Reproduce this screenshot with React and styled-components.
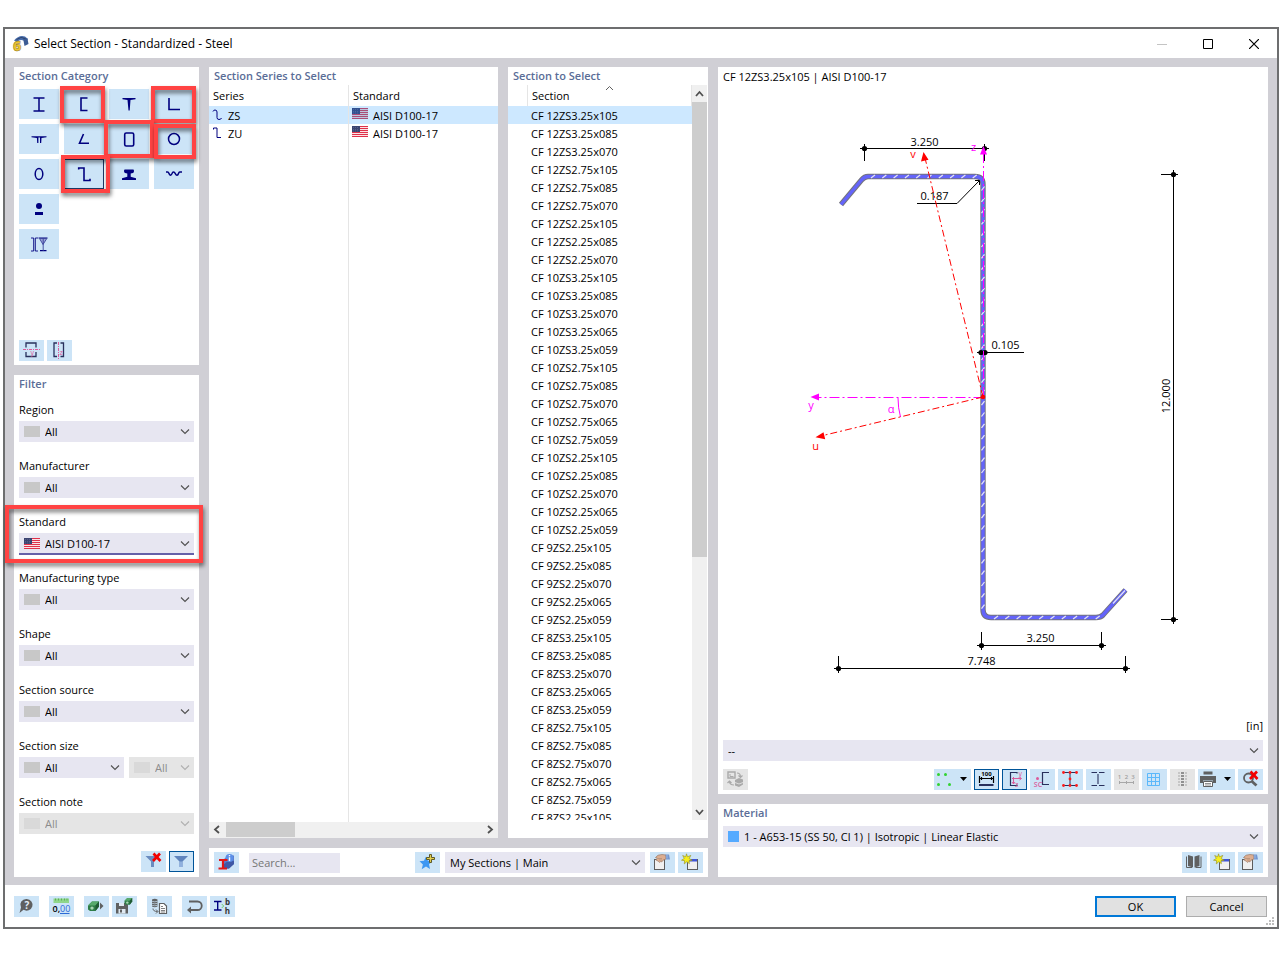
import styled, { createGlobalStyle, css } from 'styled-components';

const GlobalStyle = createGlobalStyle`
  *, *::before, *::after {
    box-sizing: border-box;
  }

  body {
    margin: 0;
    background-color: #fff;
    color: #000;
    font-family: 'Open Sans', 'Noto Sans', sans-serif;
    font-size: 11px;
    line-height: 18px;
  }

  button, input, select {
    font: inherit;
    color: inherit;
    margin: 0;
  }
`;

/* ---------- window ---------- */

const Page = styled.div`
  height: 100vh;
  min-height: 880px;
  padding: 27px 1px 31px 3px;
  display: flex;
`;

const Window = styled.main`
  flex: 1;
  min-width: 0;
  display: flex;
  flex-direction: column;
  border: 2px solid #6d6e6f;
  background-color: #fff;
`;

const TitleBar = styled.header`
  display: flex;
  align-items: center;
  height: 29px;
  padding-left: 7px;
  flex-shrink: 0;
`;

const WindowTitle = styled.h1`
  flex: 1;
  margin: 0 0 0 5px;
  font-size: 12px;
  line-height: 17px;
  font-weight: 400;
`;

const WindowButton = styled.button`
  width: 46px;
  height: 28px;
  padding: 0;
  border: 0;
  background: none;
  color: ${(props) => (props.disabled ? '#c4c4c4' : '#000')};

  svg {
    display: block;
    margin: 0 auto;
  }
`;

const Workspace = styled.div`
  flex: 1;
  min-height: 0;
  display: grid;
  grid-template-columns: 185px minmax(0, 499fr) minmax(0, 550fr);
  gap: 10px;
  padding: 9px 9px 8px;
  background-color: #d0cfd5;
`;

const Column = styled.div`
  display: flex;
  flex-direction: column;
  gap: 10px;
  min-width: 0;
  min-height: 0;
`;

const Panel = styled.section`
  display: flex;
  flex-direction: column;
  min-height: 0;
  flex: ${(props) => (props.$grow ? '1' : 'none')};
  padding: ${(props) => props.$padding || '0 5px 4px'};
  background-color: #fff;
`;

const PanelTitle = styled.h2`
  margin: 0;
  height: ${(props) => props.$height || 22}px;
  padding-left: ${(props) => (props.$inset ? '5px' : '0')};
  font-size: 11px;
  font-weight: 600;
  color: #5a6d97;
`;

/* ---------- controls ---------- */

const ToolButton = styled.button`
  display: block;
  flex: none;
  position: relative;
  width: ${(props) => (props.$wide ? '37px' : '25px')};
  height: 21px;
  padding: 0;
  border: 0;
  background-color: ${(props) => (props.disabled ? '#e5e5e5' : '#cce4f7')};
  ${(props) =>
    props.$active &&
    css`
      box-shadow: inset 0 0 0 1px #005499;
    `}

  svg {
    display: block;
  }
`;

const ToolRow = styled.div`
  display: flex;
  align-items: center;
  gap: 3px;
  justify-content: ${(props) => (props.$end ? 'flex-end' : 'flex-start')};
  margin-top: ${(props) => props.$top || '0'};
`;

const Spacer = styled.span`
  flex: 1;
`;

const SelectBox = styled.div`
  display: flex;
  align-items: center;
  position: relative;
  flex: ${(props) => props.$flex || 'none'};
  min-width: 0;
  height: 21px;
  padding: 0 4px 0 5px;
  background-color: ${(props) => (props.$disabled ? '#e5e5e5' : '#e7e6f1')};
  color: ${(props) => (props.$disabled ? '#8c8c8c' : '#000')};
  box-shadow: ${(props) => (props.$focused ? '0 1px 0 #6560a8, inset 0 -1px 0 #6560a8' : 'none')};
`;

const NativeSelect = styled.select`
  appearance: none;
  flex: 1;
  min-width: 0;
  height: 21px;
  padding: 0;
  border: 0;
  outline: 0;
  background: none;
  color: inherit;
  opacity: 1;
`;

const Swatch = styled.span`
  flex: none;
  width: ${(props) => props.$width || 16}px;
  height: 11px;
  margin-right: 5px;
  background-color: ${(props) => props.$color || '#c8c8c8'};
`;

const FlagSlot = styled.span`
  flex: none;
  display: inline-block;
  width: 16px;
  height: 11px;
  margin-right: 5px;

  svg {
    display: block;
  }
`;

const Marker = styled.span`
  position: absolute;
  inset: ${(props) => props.$inset};
  border: 4px solid #ff4343;
  filter: drop-shadow(1px 3px 2px rgba(0, 0, 0, 0.55));
  pointer-events: none;
  z-index: 2;
`;

/* ---------- categories and filter ---------- */

const CategoryGrid = styled.div`
  display: grid;
  grid-template-columns: repeat(4, 40px);
  gap: 5px;
`;

const CategoryButton = styled.button`
  position: relative;
  grid-column: ${(props) => (props.$newRow ? '1' : 'auto')};
  height: 30px;
  padding: 0;
  border: 0;
  background-color: #cce4f7;
  box-shadow: ${(props) => (props.$active ? 'inset 0 0 0 1px #1d3a66' : 'none')};

  svg {
    display: block;
  }
`;

const FieldList = styled.div`
  display: flex;
  flex-direction: column;
  gap: 15px;
`;

const Field = styled.div`
  position: relative;
`;

const FieldLabel = styled.label`
  display: block;
  height: 20px;
`;

const FieldRow = styled.div`
  display: flex;
  gap: 5px;
`;

/* ---------- lists ---------- */

const ListRow = styled.div`
  flex: 1;
  min-height: 0;
  display: grid;
  grid-template-columns: minmax(0, 289fr) minmax(0, 200fr);
  gap: 10px;
`;

const ListArea = styled.div`
  flex: 1;
  min-height: 0;
  min-width: 0;
  overflow: hidden;
  background: ${(props) =>
    props.$ruled ? 'linear-gradient(#e5e5e5, #e5e5e5) 139px 0 / 1px 100% no-repeat' : 'none'};
`;

const ListWithScroll = styled.div`
  flex: 1;
  min-height: 0;
  display: flex;
`;

const Table = styled.table`
  width: 100%;
  table-layout: fixed;
  border-collapse: separate;
  border-spacing: 0;
`;

const HeadCell = styled.th`
  position: relative;
  height: 21px;
  width: ${(props) => props.$width || 'auto'};
  padding: 0 0 0 4px;
  border-right: ${(props) => (props.$line ? '1px solid #e5e5e5' : '0')};
  text-align: left;
  font-weight: 400;
  line-height: 20px;
`;

const SortMark = styled.svg`
  position: absolute;
  top: 0;
  left: 50%;
  margin-left: -5px;
`;

const Row = styled.tr`
  background-color: ${(props) => (props.$selected ? '#cde8ff' : 'transparent')};
`;

const Cell = styled.td`
  height: 18px;
  padding: 2px 0 0 3px;
  border-right: ${(props) => (props.$line ? '1px solid #e5e5e5' : '0')};
  line-height: 16px;
  white-space: nowrap;
`;

const CellContent = styled.span`
  display: flex;
  align-items: flex-start;
  height: 16px;
`;

const ScrollTrack = styled.div`
  display: flex;
  flex: none;
  flex-direction: ${(props) => (props.$vertical ? 'column' : 'row')};
  background-color: #f0f0f0;
  width: ${(props) => (props.$vertical ? '16px' : 'auto')};
  height: ${(props) => (props.$vertical ? 'auto' : '16px')};
  border-right: ${(props) => (props.$vertical ? '1px solid #fff' : '0')};

  svg {
    display: block;
    flex: none;
  }
`;

const ScrollThumb = styled.div`
  background-color: #cdcdcd;
  flex: ${(props) => props.$share} 1 0;
  margin: ${(props) => (props.$flat ? '0 0 1px' : '0')};
`;

const ScrollRest = styled.div`
  flex: ${(props) => props.$share} 1 0;
`;

const SearchBar = styled.div`
  display: flex;
  align-items: center;
  height: 29px;
  padding: 0 5px;
  background-color: #fff;
`;

const SearchInput = styled.input`
  width: 91px;
  height: 20px;
  margin-left: 10px;
  padding: 0 3px;
  border: 0;
  background-color: #e7e6f1;

  &::placeholder {
    color: #767676;
    opacity: 1;
  }
`;

const GroupSelect = styled.div`
  display: flex;
  width: 200px;
  margin: 0 5px;
`;

/* ---------- preview ---------- */

const PreviewTitle = styled.p`
  margin: 0;
  height: 20px;
  line-height: 20px;
`;

const Drawing = styled.svg`
  display: block;
  width: 100%;
  flex: 1;
  min-height: 0;
  font-size: 11px;
`;

const UnitLabel = styled.p`
  margin: 0 0 5px;
  text-align: right;
`;

/* ---------- footer ---------- */

const Footer = styled.footer`
  position: relative;
  display: flex;
  align-items: center;
  flex-shrink: 0;
  gap: 10px;
  height: 42px;
  padding: 0 10px 0 9px;
`;

const DialogButton = styled.button`
  width: 81px;
  height: 21px;
  padding: 0;
  line-height: 17px;
  background-color: #e1e1e1;
  border: ${(props) => (props.$primary ? '2px solid #0078d7' : '1px solid #adadad')};
`;

const Grip = styled.svg`
  position: absolute;
  right: 2px;
  bottom: 1px;
`;

/* ---------- icons ---------- */

const NAVY = '#00007f';
const INK = '#28305c';
const PINK = '#dc5a9b';
const GREY = '#5f6061';

function Icon({ w = 25, h = 21, children }) {
  return (
    <svg width={w} height={h} viewBox={`0 0 ${w} ${h}`} fill="none" overflow="visible" aria-hidden="true">
      {children}
    </svg>
  );
}

function Chevron({ muted }) {
  return (
    <svg width="10" height="7" viewBox="0 0 10 7" fill="none" aria-hidden="true">
      <path d="M1 1.5 5 5.5 9 1.5" stroke={muted ? '#b0b0b0' : '#505050'} strokeWidth="1.1" />
    </svg>
  );
}

function Flag({ tinted }) {
  const red = tinted ? '#a94d78' : '#e0314a';
  const white = tinted ? '#bcc6e0' : '#fbe3e6';
  return (
    <svg width="16" height="11" viewBox="0 0 16 11" aria-hidden="true">
      <rect width="16" height="11" fill={white} />
      {[0, 2, 4, 6, 8, 10].map((y) => (
        <rect key={y} y={y} width="16" height="1" fill={red} />
      ))}
      <rect width="8" height="6" fill={tinted ? '#32508f' : '#3b4470'} />
      <path
        d="M1 1.5h6M1 3.5h6M1 5h6"
        stroke={tinted ? '#5a77ad' : '#69729a'}
        strokeWidth="0.6"
        strokeDasharray="1 1"
      />
    </svg>
  );
}

function RedCross({ x, y }) {
  return (
    <path
      transform={`translate(${x} ${y})`}
      d="M1 0.5 8 8M7.5 0.5 0.5 8"
      stroke="#f20000"
      strokeWidth="2.6"
    />
  );
}

function HandWindowIcon() {
  return (
    <Icon>
      <rect x="4.5" y="7.5" width="10" height="10" fill="#f0f0f0" stroke="#5d5d5d" />
      <path
        d="M5.5 5.5 8 3.2 12 2.5l4 .5v4l-3 1.2-1 1.6-1.4-.2-1 .8-1-.8L7 8.5 5.800 8l1.500-1.800z"
        fill="#dcae91"
        stroke="#8f6b57"
        strokeWidth="0.6"
      />
      <path d="M8 6.5h4M9 8h3" stroke="#a17c66" strokeWidth="0.5" />
      <path d="M15.5 2.500h3.500l1 5h-4z" fill="#7396cf" />
      <path d="M17 3v3.500" stroke="#9cb8e4" />
    </Icon>
  );
}

function NewWindowIcon() {
  return (
    <Icon>
      <rect x="9.5" y="7.5" width="10" height="10" fill="#f0f0f0" stroke="#5d5d5d" />
      <rect x="10" y="7" width="9" height="2.5" fill="#3f55d8" />
      <path
        d="m8.5 1.800 1 3 3.300-1.400-1.600 3.200 3 1.600-3.200.5.4 3-2.600-2-2.500 2.200.3-3.200-3.100-.5 2.800-1.700-1.600-3 3 1.300z"
        fill="#f6ee1c"
        stroke="#8f8d24"
        strokeWidth="0.6"
      />
    </Icon>
  );
}

function GreenBlock({ x, y, scale = 1 }) {
  return (
    <g transform={`translate(${x} ${y}) scale(${scale})`}>
      <path d="M0 4 4 0h7v5L7.5 9.5H2L0 8z" fill="#2f7d47" />
      <path d="M0 4 4 0h7L7.5 4z" fill="#57a96c" />
      <path d="M7.5 4 11 0v5L7.5 9.5z" fill="#1f5a33" />
      <circle cx="4" cy="6.6" r="1.700" fill="#a8d4b2" />
    </g>
  );
}

const categoryIcons = {
  i: <path d="M14.5 9h11M14.5 22h11M20 9v13" stroke={NAVY} strokeWidth="1.5" />,
  channel: <path d="M23.5 9H17v12.500h6.500" stroke={NAVY} strokeWidth="1.600" />,
  tee: <path d="M13.500 9h13v1.300l-5 .6-.8 10.500h-1.200l-1-10.500-5-.6z" fill={NAVY} />,
  angle: <path d="M15 9v11.500h11" stroke={NAVY} strokeWidth="1.6" />,
  doubleTee: (
    <path d="M12.5 12.200h15v1.100l-5 .8-.3 5h-1.200v-5.600h-1.600v5.600h-1.200l-.3-5-5.400-.8z" fill={NAVY} />
  ),
  openAngle: <path d="m19.5 10-4 9.300H25" stroke={NAVY} strokeWidth="1.6" />,
  box: <rect x="15.7" y="9" width="9" height="13" rx="1.5" stroke={NAVY} strokeWidth="1.6" />,
  pipe: <circle cx="20" cy="15" r="5.5" stroke={NAVY} strokeWidth="1.5" />,
  oval: <ellipse cx="20" cy="15" rx="3.800" ry="5.5" stroke={NAVY} strokeWidth="1.5" />,
  zed: <path d="M14.7 10.500V9H20v12.500h6v-1.700" stroke={NAVY} strokeWidth="1.6" />,
  rail: (
    <path
      d="M16 10.500h8q1 0 1 1.400t-1 2.100l-2.300.5v3.200l5.300 1.500V21H13v-1.800l5.300-1.500v-3.200L16 14q-1-.7-1-2.100t1-1.400z"
      fill={NAVY}
    />
  ),
  corrugated: (
    <path
      d="M12 13h1.500q1 0 1.500 1.500t1.500 1.700q1 0 1.500-1.600t1.500-1.600q1 0 1.800 1.600t1.700 1.600q1 0 1.500-1.700T26 13h2"
      stroke={NAVY}
      strokeWidth="1.500"
    />
  ),
  builtUp: (
    <>
      <circle cx="20" cy="12" r="3" fill={NAVY} />
      <rect x="16" y="18" width="8" height="3" fill={NAVY} />
    </>
  ),
  mixed: (
    <>
      <path d="M12 9h2.700v13H12M19 9h-2.700v13H19" stroke={NAVY} strokeWidth="0.9" />
      <path d="M19.5 9h9M21 21.700h6.500" stroke={NAVY} strokeWidth="1.200" />
      <path d="m20.5 9.500 3.500 6 3.800-6zM24.200 9v13" fill="#9ba4d6" stroke="#39419b" strokeWidth="0.9" />
    </>
  ),
};

const categories = [
  { id: 'i', label: 'I-sections' },
  { id: 'channel', label: 'Channels', marker: '-3px -1px -4px -4px' },
  { id: 'tee', label: 'T-sections' },
  { id: 'angle', label: 'Angles', marker: '-3px -2px -4px -3px' },
  { id: 'doubleTee', label: 'Double T-sections' },
  { id: 'openAngle', label: 'Open angles' },
  { id: 'box', label: 'Rectangular hollow sections', marker: '-4px -5px -4px -5px' },
  { id: 'pipe', label: 'Pipes', marker: '0 -2px -5px 0' },
  { id: 'oval', label: 'Oval hollow sections' },
  { id: 'zed', label: 'Z-sections', active: true, marker: '-4px -6px -4px -3px' },
  { id: 'rail', label: 'Rails' },
  { id: 'corrugated', label: 'Corrugated sheets' },
  { id: 'builtUp', label: 'Round and flat bars' },
  { id: 'mixed', label: 'Built-up sections', newRow: true },
];

/* ---------- data ---------- */

const filters = [
  { id: 'region', label: 'Region', options: [{ value: 'All' }] },
  { id: 'manufacturer', label: 'Manufacturer', options: [{ value: 'All' }] },
  { id: 'standard', label: 'Standard', options: [{ value: 'AISI D100-17', flag: true }], focused: true },
  { id: 'mtype', label: 'Manufacturing type', options: [{ value: 'All' }] },
  { id: 'shape', label: 'Shape', options: [{ value: 'All' }] },
  { id: 'source', label: 'Section source', options: [{ value: 'All' }] },
  { id: 'size', label: 'Section size', options: [{ value: 'All' }, { value: 'All', disabled: true }] },
  { id: 'note', label: 'Section note', options: [{ value: 'All', disabled: true }] },
];

const sections = [
  ...['105', '085', '070'].map((t) => `12ZS3.25x${t}`),
  ...['105', '085', '070'].map((t) => `12ZS2.75x${t}`),
  ...['105', '085', '070'].map((t) => `12ZS2.25x${t}`),
  ...['105', '085', '070', '065', '059'].map((t) => `10ZS3.25x${t}`),
  ...['105', '085', '070', '065', '059'].map((t) => `10ZS2.75x${t}`),
  ...['105', '085', '070', '065', '059'].map((t) => `10ZS2.25x${t}`),
  ...['105', '085', '070', '065', '059'].map((t) => `9ZS2.25x${t}`),
  ...['105', '085', '070', '065', '059'].map((t) => `8ZS3.25x${t}`),
  ...['105', '085', '070', '065', '059'].map((t) => `8ZS2.75x${t}`),
  '8ZS2.25x105',
];

/* ---------- components ---------- */

function Select({ id, label, value, swatch, swatchWidth, flag, disabled, focused, flex }) {
  return (
    <SelectBox $disabled={disabled} $focused={focused} $flex={flex}>
      {flag && (
        <FlagSlot>
          <Flag />
        </FlagSlot>
      )}
      {swatch && <Swatch $color={swatch} $width={swatchWidth} />}
      <NativeSelect id={id} aria-label={label} disabled={disabled}>
        <option>{value}</option>
      </NativeSelect>
      <Chevron muted={disabled} />
    </SelectBox>
  );
}

function Tool({ label, wide, children, ...props }) {
  return (
    <ToolButton type="button" aria-label={label} $wide={wide} {...props}>
      <Icon w={wide ? 37 : 25}>{children}</Icon>
    </ToolButton>
  );
}

function CategoryPanel() {
  return (
    <Panel $grow>
      <PanelTitle>Section Category</PanelTitle>
      <CategoryGrid>
        {categories.map((item) => (
          <CategoryButton
            key={item.id}
            type="button"
            aria-label={item.label}
            $active={item.active}
            $newRow={item.newRow}
          >
            <Icon w={40} h={30}>
              {categoryIcons[item.id]}
            </Icon>
            {item.marker && <Marker $inset={item.marker} />}
          </CategoryButton>
        ))}
      </CategoryGrid>
      <ToolRow $top="auto">
        <Tool label="Mirror about y">
          <path d="M7 7.500V3h10v4.500M7 12v4.500h10V12" stroke={INK} strokeWidth="1.300" />
          <path d="M4 9.500h17" stroke={PINK} strokeDasharray="3 1 1 1" />
          <text x="11.5" y="15" fontSize="7" fill={PINK}>y</text>
        </Tool>
        <Tool label="Mirror about z">
          <path d="M10 3H7v13.500h3M13.500 3h3v13.500h-3" stroke={INK} strokeWidth="1.300" />
          <path d="M11.500 2v17" stroke={PINK} strokeDasharray="3 1 1 1" />
          <text x="12.5" y="15" fontSize="7" fill={PINK}>z</text>
        </Tool>
      </ToolRow>
    </Panel>
  );
}

function FilterPanel() {
  return (
    <Panel $padding="0 5px 5px">
      <PanelTitle $height={26}>Filter</PanelTitle>
      <FieldList>
        {filters.map((field) => (
          <Field key={field.id}>
            <FieldLabel htmlFor={field.id}>{field.label}</FieldLabel>
            <FieldRow>
              {field.options.map((option, index) => (
                <Select
                  key={index}
                  id={index ? `${field.id}-upper` : field.id}
                  label={index ? `${field.label}, upper limit` : undefined}
                  value={option.value}
                  flag={option.flag}
                  swatch={!option.flag && (option.disabled ? '#d9d9d9' : '#c8c8c8')}
                  disabled={option.disabled}
                  focused={field.focused}
                  flex={field.options.length > 1 ? ['96', '56'][index] : '1'}
                />
              ))}
            </FieldRow>
            {field.focused && <Marker $inset="-8px -9px -9px -14px" />}
          </Field>
        ))}
      </FieldList>
      <ToolRow $end $top="17px">
        <Tool label="Clear filter">
          <path d="M4.500 5H18l-5 5.500V16h-3v-5.500z" fill="#6a8cc0" />
          <RedCross x={11.5} y={2} />
        </Tool>
        <Tool label="Filter" $active>
          <path d="M5 5h14l-5.500 5.500V16h-3v-5.500z" fill="#5f84bd" />
          <path d="M10.500 10.500h3V16h-3z" fill="#8fb0de" />
        </Tool>
      </ToolRow>
    </Panel>
  );
}

function SeriesPanel() {
  return (
    <Panel $grow $padding="0">
      <PanelTitle $height={18} $inset>Section Series to Select</PanelTitle>
      <ListArea $ruled>
        <Table>
          <thead>
            <tr>
              <HeadCell $width="140px" $line>Series</HeadCell>
              <HeadCell>Standard</HeadCell>
            </tr>
          </thead>
          <tbody>
            {['ZS', 'ZU'].map((name, index) => (
              <Row key={name} $selected={index === 0}>
                <Cell $line>
                  <CellContent>
                    <Icon w={16} h={16}>
                      <path
                        d={index === 0 ? 'M1 3.500Q1.500 2 3 2q2 0 2 2v5.500q0 2 2 2T9.500 10' : 'M1.500 3.500V2H5v9.500h4'}
                        stroke={NAVY}
                      />
                    </Icon>
                    {name}
                  </CellContent>
                </Cell>
                <Cell>
                  <CellContent>
                    <FlagSlot>
                      <Flag tinted={index === 0} />
                    </FlagSlot>
                    AISI D100-17
                  </CellContent>
                </Cell>
              </Row>
            ))}
          </tbody>
        </Table>
      </ListArea>
      <ScrollTrack>
        <Icon w={17} h={16}>
          <path d="M10 4 6 7.500 10 11" stroke="#505050" strokeWidth="1.800" />
        </Icon>
        <ScrollThumb $share={69} $flat />
        <ScrollRest $share={186} />
        <Icon w={17} h={16}>
          <path d="m7 4 4 3.500L7 11" stroke="#505050" strokeWidth="1.800" />
        </Icon>
      </ScrollTrack>
    </Panel>
  );
}

function SectionPanel() {
  return (
    <Panel $grow $padding="0 0 18px">
      <PanelTitle $height={18} $inset>Section to Select</PanelTitle>
      <ListWithScroll>
        <ListArea>
          <Table>
            <thead>
              <tr>
                <HeadCell $width="20px" $line />
                <HeadCell $line>
                  Section
                  <SortMark width="9" height="6" viewBox="0 0 9 6" fill="none">
                    <path d="M1 5 4.500 1.500 8 5" stroke="#606060" />
                  </SortMark>
                </HeadCell>
              </tr>
            </thead>
            <tbody>
              {sections.map((name, index) => (
                <Row key={name} $selected={index === 0}>
                  <Cell />
                  <Cell>CF {name}</Cell>
                </Row>
              ))}
            </tbody>
          </Table>
        </ListArea>
        <ScrollTrack $vertical>
          <Icon w={15} h={17}>
            <path d="M4 11 7.500 7l3.500 4" stroke="#505050" strokeWidth="1.800" />
          </Icon>
          <ScrollThumb $share={455} />
          <ScrollRest $share={246} />
          <Icon w={15} h={17}>
            <path d="M4 7l3.500 4L11 7" stroke="#505050" strokeWidth="1.800" />
          </Icon>
        </ScrollTrack>
      </ListWithScroll>
    </Panel>
  );
}

function SearchPanel() {
  return (
    <SearchBar>
      <Tool label="Section info">
        <path d="m9 8 5-4.500h6V12l-5 4.500H9z" fill="#5b78c8" />
        <path d="m9 13 5-4h6v3l-5 4.500H9z" fill="#3f58a6" />
        <circle cx="15.500" cy="6" r="4" fill="#5b8fe8" />
        <path d="M15.500 5.300V9M15.500 3v1.300" stroke="#fff" strokeWidth="1.400" />
        <path d="M5 8h8.500M4.500 16.500H13M9 8v8.500" stroke="#e01818" strokeWidth="2.200" />
      </Tool>
      <SearchInput type="search" placeholder="Search..." aria-label="Search sections" />
      <Spacer />
      <Tool label="Add to my sections">
        <path
          d="m11 4.500 1.900 4.300 4.600.5-3.500 3 1 4.800-4-2.500-4.300 2.700 1.200-4.800L4.500 9.300 9 8.800z"
          fill="#3d97f2"
        />
        <path d="M14.500 2.500h2v3h3v2h-3v3h-2v-3h-3v-2h3z" fill="#e2cf4e" stroke="#5f5a28" />
      </Tool>
      <GroupSelect>
        <Select label="Section group" value="My Sections | Main" flex="1" />
      </GroupSelect>
      <ToolRow>
        <ToolButton type="button" aria-label="Edit group">
          <HandWindowIcon />
        </ToolButton>
        <ToolButton type="button" aria-label="New group">
          <NewWindowIcon />
        </ToolButton>
      </ToolRow>
    </SearchBar>
  );
}

const PROFILE =
  'M841 204.500 861.500 180Q864.500 176.500 868 176.500H975Q983 176.500 983 184.500V609.500Q983 617.500 991 617.500H1096Q1100.500 617.500 1103 615L1125.500 590';

function Dot({ x, y }) {
  return <circle cx={x} cy={y} r="2.6" fill="#000" />;
}

function SectionDrawing() {
  const range = (count) => Array.from({ length: count }, (_, i) => i);
  return (
    <Drawing viewBox="723 87 540 630" role="img" aria-label="CF 12ZS3.25x105 cross-section">
      <g fill="none">
        <path d={PROFILE} stroke="#74747c" strokeWidth="5.400" />
        <path d={PROFILE} stroke="#6464fa" strokeWidth="3.400" />
        <g stroke="#e6e6f4" strokeWidth="1.200">
          {range(10).map((i) => (
            <path key={i} d={`M${871 + i * 11.3} 178l4-3`} />
          ))}
          {range(38).map((i) => (
            <path key={i} d={`M981.5 ${190.5 + i * 11.3}l3-4`} />
          ))}
          {range(10).map((i) => (
            <path key={i} d={`M${994 + i * 11.3} 619l4-3`} />
          ))}
          <path d="M1113 603.500 1125 590.500" />
        </g>
      </g>

      {/* dimension lines */}
      <g stroke="#000" fill="none">
        <path d="M860 148.500h129M864.500 144v17M984.500 144v17" />
        <path d="M917 203.500h40L979 181M975 180.500h4.500v4.500" />
        <path d="M977 352.500h47" />
        <path d="M977 645.500h129M981.500 632v18M1101.500 632v18" />
        <path d="M834 668.500h296M838.500 656v17M1125.500 656v17" />
        <path d="M1173.500 170v454M1161 174.500h17M1161 619.500h17" />
      </g>
      <Dot x={864.5} y={148.5} />
      <Dot x={984.5} y={148.5} />
      <Dot x={981} y={352.5} />
      <Dot x={985} y={352.5} />
      <Dot x={981.5} y={645.5} />
      <Dot x={1101.5} y={645.5} />
      <Dot x={838.5} y={668.5} />
      <Dot x={1125.5} y={668.5} />
      <Dot x={1173.5} y={174.5} />
      <Dot x={1173.5} y={619.5} />
      <g textAnchor="middle">
        <text x="924.5" y="146">3.250</text>
        <text x="934.5" y="200">0.187</text>
        <text x="1005.5" y="349">0.105</text>
        <text x="1040.5" y="642">3.250</text>
        <text x="981.5" y="665">7.748</text>
        <text transform="translate(1170 396) rotate(-90)">12.000</text>
      </g>

      {/* axes */}
      <g stroke="#f0f" fill="none">
        <path d="M983.500 397.500H819M983.500 397V154" strokeDasharray="10 3 2 3" />
        <path d="M898 398q0 10 2.500 19" />
      </g>
      <g stroke="#f00" fill="none" strokeDasharray="7 3 2 3">
        <path d="M983 397 925.500 160M983 397 823 435.500" />
      </g>
      <path d="m810.500 397 8.500-3.500v7zM983.500 146l-3.500 8.500h7z" fill="#f0f" />
      <path d="m923.500 152-2.500 9.500 7.500-1.700zM815.500 437.200l8-5 1.700 7z" fill="#f00" />
      <circle cx="983" cy="397" r="2.3" fill="#f00" />
      <g textAnchor="middle" fill="#f0f">
        <text x="811" y="409">y</text>
        <text x="891" y="413">α</text>
        <text x="973.5" y="151">z</text>
      </g>
      <g textAnchor="middle" fill="#f00">
        <text x="913" y="158">v</text>
        <text x="815.5" y="450">u</text>
      </g>
    </Drawing>
  );
}

function PreviewPanel() {
  return (
    <Panel $grow>
      <PreviewTitle>CF 12ZS3.25x105 | AISI D100-17</PreviewTitle>
      <SectionDrawing />
      <UnitLabel>[in]</UnitLabel>
      <Select label="Section variant" value="--" />
      <ToolRow $top="8px">
        <Tool label="Swap view" disabled>
          <path d="M5 3h7v6H5z" stroke="#a9a9a9" strokeWidth="1.400" />
          <path d="M7 5v2.500h3.500" stroke="#a9a9a9" />
          <path d="m12 11 4-2 4 1.500v5L16 18l-4-1.500z" fill="#a9a9a9" />
          <path d="M12 13.500 16 15l4-1.500" stroke="#dcdcdc" />
          <path
            d="M14 4q3.500 0 3.500 4M15.500 6.500l2 2 2-2M11 16q-4.500 0-4.500-3.500M4.500 14l2-2 2 2"
            stroke="#a9a9a9"
            strokeWidth="1.200"
          />
        </Tool>
        <Spacer />
        <Tool label="Stress points" wide>
          {[[4.5, 5.5], [11.5, 5.5], [4.5, 15.5], [15.5, 15.5]].map(([x, y]) => (
            <circle key={`${x}-${y}`} cx={x} cy={y} r="1.5" fill="#31d331" />
          ))}
          <path d="M26 8h7l-3.500 4z" fill="#000" />
        </Tool>
        <Tool label="Dimensions" $active>
          <text x="12.5" y="7" fontSize="6" fontWeight="700" textAnchor="middle" fill="#000">100</text>
          <path d="M5.500 7v7M19.500 7v7M5.500 9.500h14M7.500 8v3M17.500 8v3" stroke="#000" strokeWidth="1.200" />
          <path d="M5 16h14.500" stroke={INK} strokeWidth="2" />
        </Tool>
        <Tool label="Section axes" $active>
          <path d="M15 4.500v-1H8.500v13H15v-1" stroke={INK} strokeWidth="1.200" />
          <path d="M10 9.500h9M11.500 8v7M17.500 8l2 1.500-2 1.500M10 13l1.500 2 1.500-2" stroke={PINK} />
          <text x="16.5" y="7" fontSize="7" fill={PINK}>y</text>
          <text x="13" y="18" fontSize="7" fill={PINK}>z</text>
        </Tool>
        <Tool label="Shear center">
          <path d="M19 3.500h-6.500v12H19" stroke={INK} strokeWidth="1.200" />
          <circle cx="7.5" cy="9.5" r="1.5" fill={PINK} />
          <text x="8" y="18" fontSize="7" fontWeight="600" textAnchor="middle" fill={PINK}>SC</text>
        </Tool>
        <Tool label="Nodes">
          <path d="M5 3.500h14M5 16.500h14M12 3.500v13" stroke={INK} />
          {[[5.5, 3.5], [12, 3.5], [18.5, 3.5], [12, 10], [5.5, 16.5], [12, 16.5], [18.5, 16.5]].map(
            ([x, y]) => (
              <circle key={`${x}-${y}`} cx={x} cy={y} r="1.4" fill="#ff1a1a" />
            )
          )}
        </Tool>
        <Tool label="Elements">
          <path
            d="M5.500 3.500h5.500M13 3.500h5.500M5.500 16.500h5.500M13 16.500h5.500M12 5v10"
            stroke={INK}
            strokeWidth="1.100"
          />
        </Tool>
        <Tool label="Numbering" disabled>
          <g fontSize="6" fontWeight="600" textAnchor="middle" fill="#a0a0a0">
            <text x="5.5" y="10">1</text>
            <text x="12.5" y="10">2</text>
            <text x="19" y="10">3</text>
          </g>
          <path d="M5 13.500h15M5.500 12v3M12.500 12v3M19.500 12v3" stroke="#a8a8a8" />
        </Tool>
        <Tool label="Grid">
          <path
            d="M5.500 4.500h12v12h-12zM9.500 4.500v12M13.500 4.500v12M5.500 8.500h12M5.500 12.500h12"
            stroke="#5ab8fb"
          />
        </Tool>
        <Tool label="Values" disabled>
          <path d="M12.500 3v15" stroke="#909090" strokeWidth="3" strokeDasharray="2 1" />
          <path d="M9 3.500v14M16 3.500v14" stroke="#a8a8a8" strokeWidth="2" strokeDasharray="1 2" />
        </Tool>
        <Tool label="Print" wide>
          <path d="M5.500 2.500h9v3h-9zM2 7h16v7h-3v-2.500H5V14H2z" fill={GREY} />
          <path d="M5.500 12.500h9v5h-9z" fill="#fff" stroke={GREY} />
          <path d="M7 14.500h6M7 16h6" stroke={GREY} strokeWidth="0.700" />
          <path d="M26 8h7l-3.500 4z" fill="#000" />
        </Tool>
        <Tool label="Reset zoom">
          <circle cx="10.500" cy="9" r="4.500" stroke={GREY} strokeWidth="1.800" />
          <path d="m13.500 12 5 4.500" stroke={GREY} strokeWidth="2.800" />
          <RedCross x={11.5} y={2} />
        </Tool>
      </ToolRow>
    </Panel>
  );
}

function MaterialPanel() {
  return (
    <Panel>
      <PanelTitle>Material</PanelTitle>
      <Select
        label="Material"
        value="1 - A653-15 (SS 50, Cl 1) | Isotropic | Linear Elastic"
        swatch="#55aaff"
        swatchWidth={11}
      />
      <ToolRow $end $top="5px">
        <Tool label="Material library">
          <path d="M6 3 11 4.500v11L6 14zM17.500 3l-5 1.500v11l5-1.500z" fill={GREY} />
          <path d="M4.500 4.500v11H10M19 4.500v11h-5.500" stroke={GREY} />
        </Tool>
        <ToolButton type="button" aria-label="New material">
          <NewWindowIcon />
        </ToolButton>
        <ToolButton type="button" aria-label="Edit material">
          <HandWindowIcon />
        </ToolButton>
      </ToolRow>
    </Panel>
  );
}

function DialogFooter() {
  return (
    <Footer>
      <Tool label="Help">
        <path
          d="M12.800 3a6 5.800 0 1 1-3.300 10.800L5.500 17l1.500-5.500A6 5.800 0 0 1 12.800 3z"
          fill={GREY}
        />
        <text x="12.8" y="12.5" fontSize="10" fontWeight="700" textAnchor="middle" fill="#e3eef8">?</text>
      </Tool>
      <Tool label="Units and decimal places">
        <path d="M4.500 2.500H20V7H4.500z" fill="#8fd68a" />
        <path
          d="M6.500 2.500v2M9.500 2.500v2M12.500 2.500v2M15.500 2.500v2M18 2.500v2"
          stroke="#4fa34c"
          strokeWidth="0.800"
        />
        <text x="3.5" y="16" fontSize="9" fontWeight="600" fill="#000">0,</text>
        <text x="11" y="16" fontSize="9" fill="#2c6ad6">00</text>
        <path d="M11 17.500h9.500" stroke="#2c6ad6" />
      </Tool>
      <ToolRow>
        <Tool label="Load">
          <GreenBlock x={4} y={5.5} />
          <path d="M16 6.500v7l3.500-3.500z" fill={GREY} />
        </Tool>
        <Tool label="Save">
          <path d="M4 7h10l2 2v8.500H4z" fill={GREY} />
          <path d="M7 7h5v3H7zM6.500 13h7v4.500h-7z" fill="#dfe9f2" />
          <path d="M8 13.500h2v3H8z" fill={GREY} />
          <GreenBlock x={12.5} y={2} scale={0.7} />
        </Tool>
      </ToolRow>
      <Tool label="Import from database">
        <path d="M5 3.500q2.700-1.300 5.500 0v7q-2.700 1.300-5.500 0z" fill={GREY} />
        <path
          d="M5 5.300q2.700 1 5.500 0M5 7.300q2.700 1 5.500 0M5 9.300q2.700 1 5.500 0"
          stroke="#cce4f7"
          strokeWidth="0.700"
        />
        <path d="M6 12.500q0 3 4.500 3M9 13.500l2 2-2 2" stroke={GREY} />
        <path d="M12.500 7.500h4.500l2.500 2.500v7.500h-7z" fill="#fff" stroke={GREY} strokeWidth="1.200" />
        <path d="M14 10.500h2M14 12.500h4M14 14.500h4M14 16h4" stroke={GREY} strokeWidth="0.800" />
      </Tool>
      <ToolRow>
        <Tool label="Undo">
          <path d="M7 5.500h8.500a4 4 0 0 1 0 8.500H7" stroke={GREY} strokeWidth="1.800" />
          <path d="m5 14 4-3.500v7z" fill={GREY} />
        </Tool>
        <Tool label="Parametric section">
          <path d="M4 5.500h7.500M4 14h7.500M7.700 5.500V14" stroke={NAVY} strokeWidth="1.400" />
          <path d="m11.700 8 2 2-2 2" stroke="#6fce6f" />
          <g fontSize="8" fontWeight="700" textAnchor="middle" fill="#333">
            <text x="17.5" y="9">b</text>
            <text x="17.5" y="18">h</text>
          </g>
        </Tool>
      </ToolRow>
      <Spacer />
      <DialogButton type="submit" $primary>OK</DialogButton>
      <DialogButton type="button">Cancel</DialogButton>
      <Grip width="9" height="9" viewBox="0 0 9 9" fill="#bdbdbd" aria-hidden="true">
        <path d="M6 0h2v2H6zM3 3h2v2H3zM6 3h2v2H6zM0 6h2v2H0zM3 6h2v2H3zM6 6h2v2H6z" />
      </Grip>
    </Footer>
  );
}

function App() {
  return (
    <>
      <GlobalStyle />
      <Page>
        <Window>
          <TitleBar>
            <Icon w={17} h={17}>
              <path d="M2 5.500Q7-.5 13 1.500l3 2.500-2 3Q9 3 5 7z" fill="#4a6fae" />
              <path d="m11 3 4.500.5 1 5.500-4 2z" fill="#3c5c95" />
              <path d="M4.500 4.500Q9 1 13.500 3.500" stroke="#27375c" strokeWidth="0.800" />
              <text x="1" y="15.5" fontSize="14" fontWeight="800" fill="#efc62e" stroke="#8e7420" strokeWidth="0.5">
                6
              </text>
            </Icon>
            <WindowTitle>Select Section - Standardized - Steel</WindowTitle>
            <WindowButton type="button" aria-label="Minimize" disabled>
              <svg width="10" height="10" viewBox="0 0 10 10">
                <path d="M0 5.500h10" stroke="currentColor" />
              </svg>
            </WindowButton>
            <WindowButton type="button" aria-label="Maximize">
              <svg width="10" height="10" viewBox="0 0 10 10">
                <path d="M.5.5h9v9h-9z" fill="none" stroke="currentColor" />
              </svg>
            </WindowButton>
            <WindowButton type="button" aria-label="Close">
              <svg width="10" height="10" viewBox="0 0 10 10">
                <path d="m0 0 10 10M10 0 0 10" stroke="currentColor" strokeWidth="1.200" />
              </svg>
            </WindowButton>
          </TitleBar>
          <Workspace>
            <Column>
              <CategoryPanel />
              <FilterPanel />
            </Column>
            <Column>
              <ListRow>
                <SeriesPanel />
                <SectionPanel />
              </ListRow>
              <SearchPanel />
            </Column>
            <Column>
              <PreviewPanel />
              <MaterialPanel />
            </Column>
          </Workspace>
          <DialogFooter />
        </Window>
      </Page>
    </>
  );
}

export default App;
